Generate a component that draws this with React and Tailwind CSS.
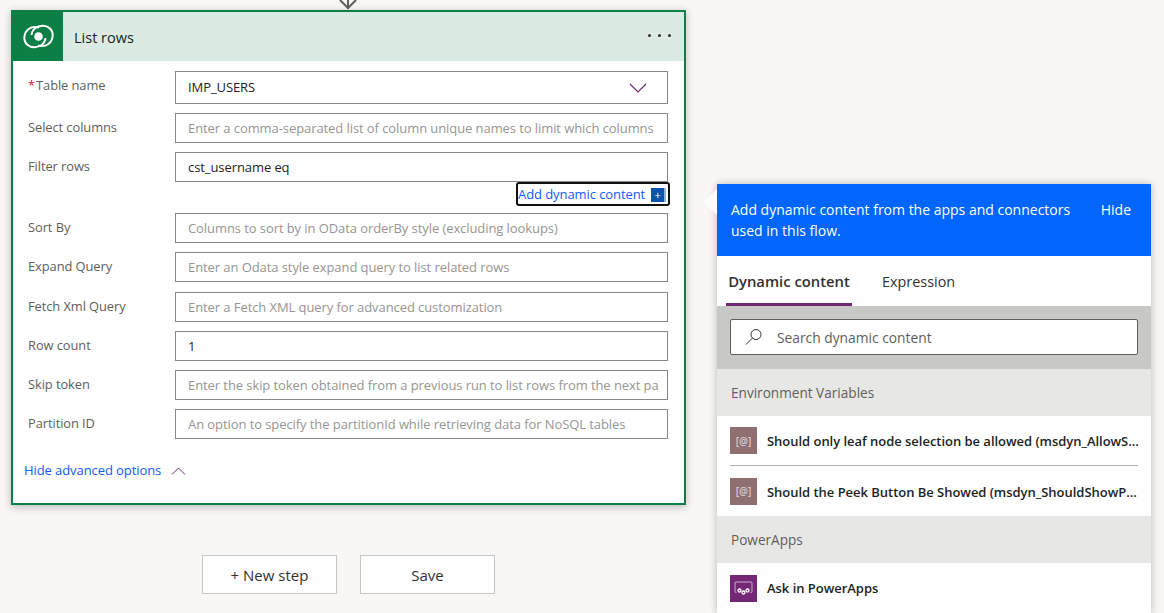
const FONT = { fontFamily: '"Open Sans", "Noto Sans", sans-serif' }

function Field({ label, required, value, placeholder, h = 'h-[30px]', mb = 'mb-[9px]', textPad = 'pt-[2px]', children }) {
  return (
    <div className={`flex ${mb}`}>
      <div className="w-[149px] pl-[2px] pt-[5px] text-[12.9px] tracking-[-0.08px] leading-[18px] text-[#605e5c] whitespace-nowrap">
        {required && <span className="text-[#e81123] mr-[1px]">*</span>}
        {label}
      </div>
      <div className={`w-[493px] ${h} border border-[#8a8886] bg-white flex items-center pl-[12px] pr-[8px] overflow-hidden`}>
        {value && <span className={`${textPad} text-[13px] tracking-[-0.08px] text-[#201f1e] whitespace-nowrap`}>{value}</span>}
        {placeholder && <span className={`${textPad} text-[13px] tracking-[-0.08px] text-[#979593] whitespace-nowrap`}>{placeholder}</span>}
        {children}
      </div>
    </div>
  )
}

function DataverseLogo() {
  return (
    <svg width="31" height="25" viewBox="0 0 31 25" fill="none" stroke="#ffffff" strokeWidth="1.900">
      <path d="M16 3.500C8 1 1.300 6.500 1.300 14c0 5.500 4.700 9.500 10.200 9.300 6-.2 10.500-3.800 11-9.300" />
      <path d="M15 21.500C23 24 29.700 18.500 29.700 11c0-5.500-4.700-9.500-10.200-9.300-6 .2-10.500 3.800-11 9.300" />
      <circle cx="15.500" cy="12.500" r="4.300" fill="#ffffff" stroke="none" />
    </svg>
  )
}

function VariableIcon() {
  return (
    <div className="w-[27px] h-[27px] shrink-0 bg-[#8f6f6f] flex items-center justify-center text-[10px] text-[#d9cdcd] leading-none">
      [@]
    </div>
  )
}

function PowerAppsIcon() {
  return (
    <div className="w-[27px] h-[27px] shrink-0 bg-[#742774] flex items-center justify-center">
      <svg width="19" height="15" viewBox="0 0 19 15" fill="none">
        <path d="M2.500 11.500H2a1 1 0 0 1-1-1V2a1 1 0 0 1 1-1h15a1 1 0 0 1 1 1v8.500a1 1 0 0 1-1 1h-.5" stroke="#ffffff" strokeWidth="0.9" opacity="0.7" />
        <circle cx="5.500" cy="9.500" r="1.500" stroke="#ffffff" strokeWidth="1.300" />
        <circle cx="9.500" cy="11.500" r="1.500" stroke="#ffffff" strokeWidth="1.300" />
        <circle cx="13.500" cy="9.500" r="1.500" stroke="#ffffff" strokeWidth="1.300" />
      </svg>
    </div>
  )
}

function SectionHeader({ title, h }) {
  return (
    <div className={`${h} bg-[#e7e8e6] px-[14px] pt-[2px] flex items-center text-[13.6px] text-[#605e5c]`}>{title}</div>
  )
}

function Row({ icon, text, textPad = 'pt-[3px]' }) {
  return (
    <div className="h-[50px] mx-[13px] flex items-center gap-[10px] text-[13px] tracking-[-0.03px] font-semibold text-[#201f1e] whitespace-nowrap">
      {icon}
      <span className={textPad}>{text}</span>
    </div>
  )
}

export default function App() {
  return (
    <div className="h-[613px] w-[1164px] overflow-hidden bg-[#f8f7f5] flex relative" style={FONT}>
      {/* arrow coming in from the previous step */}
      <svg className="absolute left-[337px] top-0" width="22" height="11" viewBox="0 0 22 11" fill="none" stroke="#605e5c" strokeWidth="2">
        <path d="M11 0v9M3 0l8 8 8-8" />
      </svg>

      {/* action card and the buttons under it */}
      <div className="pl-[11px] pt-[10px] w-[706px] shrink-0">
        <div className="w-[675px] h-[495px] border-2 border-[#0b7f45] bg-white shadow-[0_2px_8px_rgba(0,0,0,0.25)]">
          <div className="h-[49px] bg-[#dbebe3] flex items-center">
            <div className="w-[50px] h-full bg-[#0b7f45] flex items-center justify-center">
              <DataverseLogo />
            </div>
            <div className="ml-[11px] pt-[2px] text-[14.5px] text-[#201f1e]">List rows</div>
            <div className="ml-auto mr-[13px] flex gap-[7px] mt-[-3px]">
              <span className="w-[3px] h-[3px] rounded-full bg-[#323130]" />
              <span className="w-[3px] h-[3px] rounded-full bg-[#323130]" />
              <span className="w-[3px] h-[3px] rounded-full bg-[#323130]" />
            </div>
          </div>

          <div className="pl-[13px] pt-[10px]">
            <Field label="Table name" required value="IMP_USERS" h="h-[33px]" textPad="pt-0">
              <svg className="ml-auto mr-[12px]" width="18" height="10" viewBox="0 0 18 10" fill="none" stroke="#742774" strokeWidth="1.2">
                <path d="M1 1l8 8 8-8" />
              </svg>
            </Field>
            <Field label="Select columns" placeholder="Enter a comma-separated list of column unique names to limit which columns" />
            <Field label="Filter rows" value="cst_username eq" mb="mb-0" />
            <div className="h-[31px] flex justify-end pr-[14px]">
              <div className="h-[24px] w-[154px] border-2 border-[#111111] rounded-[3px] flex items-center pt-[2px] text-[13px] tracking-[-0.08px] text-[#0f5cff] whitespace-nowrap relative">
                Add dynamic content
                <span className="absolute right-[4px] top-[4px] w-[13px] h-[14px] bg-[#0b53ad] text-white text-[11px] leading-[14px] text-center">+</span>
                <span className="absolute right-[2px] top-[4px] w-[2px] h-[14px] bg-[#8fb4dc]" />
              </div>
            </div>
            <Field label="Sort By" placeholder="Columns to sort by in OData orderBy style (excluding lookups)" />
            <Field label="Expand Query" placeholder="Enter an Odata style expand query to list related rows" mb="mb-[10px]" />
            <Field label="Fetch Xml Query" placeholder="Enter a Fetch XML query for advanced customization" />
            <Field label="Row count" value="1" />
            <Field label="Skip token" placeholder="Enter the skip token obtained from a previous run to list rows from the next pa" />
            <Field label="Partition ID" placeholder="An option to specify the partitionId while retrieving data for NoSQL tables" mb="mb-[21px]" />
            <div className="flex items-center gap-[10px] ml-[-2px] pt-[1px] text-[13px] tracking-[-0.08px] text-[#0f5cff]">
              Hide advanced options
              <svg width="15" height="8" viewBox="0 0 15 8" fill="none" stroke="#742774" strokeWidth="1">
                <path d="M1 7.500l6.500-6.500 6.500 6.500" />
              </svg>
            </div>
          </div>
        </div>

        <div className="flex gap-[23px] mt-[50px] ml-[191px]">
          <div className="w-[135px] h-[39px] border border-[#c8c6c4] bg-white flex items-center justify-center pt-[2px] text-[15px] text-[#323130]">+ New step</div>
          <div className="w-[135px] h-[39px] border border-[#c8c6c4] bg-white flex items-center justify-center pt-[2px] text-[15px] text-[#323130]">Save</div>
        </div>
      </div>

      {/* dynamic content panel */}
      <div className="mt-[184px] ml-[11px] w-[434px] h-[429px] shrink-0 bg-white relative shadow-[0_0_8px_rgba(0,0,0,0.25)]">
        <div className="absolute left-[-13px] top-[5px] w-0 h-0 border-y-[13px] border-y-transparent border-r-[13px] border-r-white" />
        <div className="h-[72px] bg-[#0066ff] flex pl-[14px] pr-[20px] pt-[15px] text-white text-[14px] leading-[21px]">
          <div className="w-[360px]">Add dynamic content from the apps and connectors used in this flow.</div>
          <div className="ml-auto">Hide</div>
        </div>
        <div className="h-[50px] flex pl-[9px]">
          <div className="w-[126px] h-full border-b-[3px] border-[#742774] flex items-center justify-center pt-[3px] text-[14.8px] font-semibold text-[#323130] whitespace-nowrap">Dynamic content</div>
          <div className="ml-[30px] h-full pt-[2px] flex items-center text-[14.4px] text-[#323130]">Expression</div>
        </div>
        <div className="h-[63px] bg-[#c8c9c6] px-[13px] pt-[13px]">
          <div className="h-[36px] bg-white border border-[#605e5c] rounded-[2px] flex items-center pl-[14px] text-[13.8px] text-[#605e5c]">
            <svg width="18" height="18" viewBox="0 0 18 18" fill="none" stroke="#323130" strokeWidth="1">
              <circle cx="11" cy="6.500" r="5" />
              <path d="M7.500 10L1 16.500" />
            </svg>
            <span className="ml-[14px] pt-[2px]">Search dynamic content</span>
          </div>
        </div>
        <SectionHeader title="Environment Variables" h="h-[47px]" />
        <div className="h-[50px] mx-[13px] border-b border-[#b3b0ad]">
          <div className="h-full flex items-center gap-[10px] text-[13px] tracking-[-0.03px] font-semibold text-[#201f1e] whitespace-nowrap">
            <VariableIcon />
            <span className="pt-[2px]">Should only leaf node selection be allowed (msdyn_AllowS...</span>
          </div>
        </div>
        <Row icon={<VariableIcon />} text="Should the Peek Button Be Showed (msdyn_ShouldShowP..." />
        <SectionHeader title="PowerApps" h="h-[47px]" />
        <Row icon={<PowerAppsIcon />} text="Ask in PowerApps" textPad="pt-[2px]" />
      </div>
    </div>
  )
}
